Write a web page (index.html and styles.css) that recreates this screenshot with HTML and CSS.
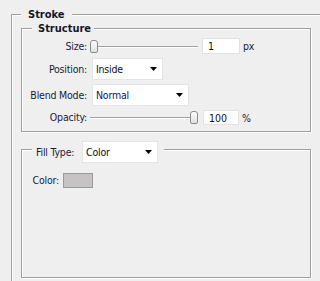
FILE: index.html
```html
<!DOCTYPE html>
<html lang="en">
<head>
    <meta charset="UTF-8">
    <title>Stroke</title>
    <link rel="stylesheet" href="styles.css">
</head>
<body>
    <fieldset class="group group-outer">
        <legend class="title title-stroke">Stroke</legend>

        <fieldset class="group group-structure">
            <legend class="title title-structure">Structure</legend>
            <div class="form-grid">
                <span class="label">Size:</span>
                <div class="control">
                    <div class="slider"><span class="thumb"></span></div>
                    <input class="num" type="text" value="1">
                    <span class="unit">px</span>
                </div>

                <span class="label">Position:</span>
                <div class="control">
                    <div class="dropdown dd-position">
                        <span>Inside</span>
                        <svg width="7" height="4" viewBox="0 0 7 4"><polygon points="0,0 7,0 3.5,4" fill="#000"/></svg>
                    </div>
                </div>

                <span class="label">Blend Mode:</span>
                <div class="control">
                    <div class="dropdown dd-blend">
                        <span class="val-blue">Normal</span>
                        <svg width="7" height="4" viewBox="0 0 7 4"><polygon points="0,0 7,0 3.5,4" fill="#000"/></svg>
                    </div>
                </div>

                <span class="label">Opacity:</span>
                <div class="control">
                    <div class="slider slider-max"><span class="thumb"></span></div>
                    <input class="num num-opacity" type="text" value="100">
                    <span class="unit">%</span>
                </div>
            </div>
        </fieldset>

        <fieldset class="group group-fill">
            <legend class="fill-legend">
                <span class="label fill-label">Fill Type:</span>
                <div class="dropdown dd-fill">
                    <span>Color</span>
                    <svg width="7" height="4" viewBox="0 0 7 4"><polygon points="0,0 7,0 3.5,4" fill="#000"/></svg>
                </div>
            </legend>
            <div class="color-row">
                <span class="label color-label">Color:</span>
                <span class="swatch"></span>
            </div>
        </fieldset>
    </fieldset>
</body>
</html>
```

FILE: styles.css
```css
html, body {
    margin: 0;
    padding: 0;
    height: 100%;
    overflow: hidden;
}

body {
    background: #efefef;
    font-family: "DejaVu Sans Condensed", "DejaVu Sans", sans-serif;
    font-size: 10.5px;
    letter-spacing: -0.2px;
    color: #1c1c38;
}

/* etched group frame, gray line with a white line next to it */
.group {
    margin: 0;
    min-width: 0;
    border: 1px solid #a0a0a0;
    box-shadow: inset 1px 1px 0 #fff, 1px 1px 0 #fff;
}

.group-outer {
    margin: 8px 0 0 11px;
    padding: 1px 9px 3px 9px;
    border-right: none;
    border-bottom: none;
    box-shadow: inset 1px 1px 0 #fff;
}

.title {
    font-size: 11px;
    font-weight: bold;
    letter-spacing: 0;
    line-height: 13px;
    background: #efefef;
    color: #16162a;
}

.title-stroke {
    padding: 0 7px;
}

.title-structure {
    padding: 0 3px 0 6px;
}

.group-structure {
    padding: 3px 0 6px 10px;
}

.form-grid {
    display: grid;
    grid-template-columns: 55px auto;
    column-gap: 3px;
    row-gap: 4px;
    align-items: center;
}

.label {
    justify-self: end;
    white-space: nowrap;
    line-height: 13px;
}

.control {
    display: flex;
    align-items: center;
}

.slider {
    width: 108px;
    height: 13px;
    display: flex;
    align-items: center;
    background:
        linear-gradient(#a3a3a3, #a3a3a3) 0 6px / 100% 1px no-repeat,
        linear-gradient(#fff, #fff) 0 7px / 100% 1px no-repeat;
}

.slider-max {
    justify-content: flex-end;
}

.thumb {
    width: 8px;
    height: 13px;
    box-sizing: border-box;
    border: 1px solid #8c8c8c;
    border-radius: 3px 3px 2px 2px;
    background: linear-gradient(#fdfdfd, #e0e0e0);
}

.num {
    width: 38px;
    height: 16px;
    box-sizing: border-box;
    margin: 0 0 0 4px;
    padding: 0 0 0 5px;
    border: 1px solid #e2e2e2;
    background: #fff;
    font: inherit;
    color: #101010;
    outline: none;
}

.num-opacity {
    width: 36px;
    height: 15px;
    margin-left: 5px;
}

.unit {
    margin-left: 3px;
}

.dropdown {
    display: flex;
    align-items: center;
    justify-content: space-between;
    height: 22px;
    box-sizing: border-box;
    padding: 0 5px 0 3px;
    background: #fff;
    border: 1px solid #e4e4e4;
    color: #101010;
}

.val-blue {
    color: #14145a;
}

.dd-position {
    width: 71px;
    margin-left: 2px;
}

.dd-blend {
    width: 97px;
    margin-left: 2px;
}

.dd-fill {
    width: 76px;
}

.group-fill {
    margin-top: 3px;
    padding: 10px 0 89px 10px;
}

.fill-legend {
    display: flex;
    align-items: center;
    gap: 4px;
    padding: 6px 6px 0 4px;
    background: #efefef;
}

.fill-label {
    width: 42px;
}

.color-row {
    display: flex;
    align-items: center;
    gap: 4px;
}

.color-label {
    width: 27px;
    text-align: right;
}

.swatch {
    width: 30px;
    height: 15px;
    box-sizing: border-box;
    border: 1px solid #9a9a9a;
    background: #c5c3c4;
}
```
